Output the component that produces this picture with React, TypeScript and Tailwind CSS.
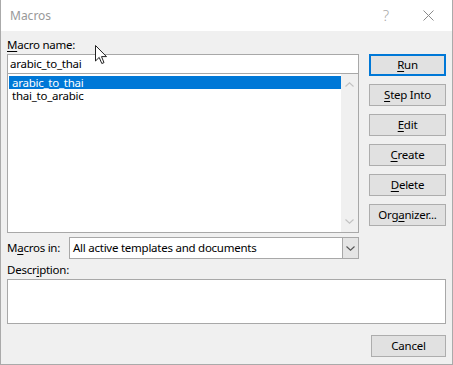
import React from 'react';

const font = { fontFamily: '"Segoe UI", "Noto Sans", "Open Sans", sans-serif' };

// Win10 style push button
const Btn = ({ label, u, isDefault }: { label: string; u: number; isDefault?: boolean }) => (
  <div
    className={`h-[22px] w-[77px] flex items-center justify-center bg-[#e1e1e1] text-black ${
      isDefault ? 'border-2 border-[#0078d7]' : 'border border-[#adadad]'
    }`}
  >
    <span>
      {label.slice(0, u)}
      <span className="underline underline-offset-2">{label[u]}</span>
      {label.slice(u + 1)}
    </span>
  </div>
);

const Chevron = ({ up, color }: { up?: boolean; color: string }) => (
  <svg width="9" height="5" viewBox="0 0 9 5" fill="none">
    <path d={up ? 'M0.5 4.5 L4.5 0.8 L8.5 4.5' : 'M0.5 0.5 L4.5 4.2 L8.5 0.5'} stroke={color} strokeWidth="1.1" />
  </svg>
);

export default function App() {
  return (
    <div className="w-[453px] h-[365px] flex flex-col bg-white border-l border-r border-b border-[#aaaaaa] relative select-none" style={font}>
      {/* title bar */}
      <div className="h-[31px] flex items-center bg-white">
        <span className="ml-[9px] text-[12px] text-[#999999]">Macros</span>
        <span className="ml-auto mr-[34px] text-[15px] text-[#aaaaaa] font-light">?</span>
        <svg width="11" height="11" viewBox="0 0 11 11" className="mr-[18px]">
          <path d="M0.5 0.5 L10.5 10.5 M10.5 0.5 L0.5 10.5" stroke="#8a8a8a" strokeWidth="1" />
        </svg>
      </div>

      {/* body */}
      <div className="flex-1 bg-[#f0f0f0] pl-[6px] pt-[6px] text-[11.5px] tracking-[-0.25px] text-black">
        <div className="flex">
          {/* left column */}
          <div className="w-[352px] flex flex-col">
            <div className="h-[17px] leading-[16px]">
              <span className="underline underline-offset-2">M</span>acro name:
            </div>
            <div className="h-[20px] bg-white border border-[#a8a8a8] flex items-center pl-[2px]">arabic_to_thai</div>
            <div className="h-[159px] bg-white border border-[#a8a8a8] border-t-0 flex">
              <div className="flex-1 pt-[2px] pl-[1px]">
                <div className="h-[13px] leading-[13px] bg-[#0078d7] text-white pl-[3px]">arabic_to_thai</div>
                <div className="h-[13px] leading-[13px] pl-[3px]">thai_to_arabic</div>
              </div>
              <div className="w-[17px] bg-[#f0f0f0] flex flex-col items-center justify-between py-[8px]">
                <Chevron up color="#c2c2c2" />
                <Chevron color="#c2c2c2" />
              </div>
            </div>
            <div className="mt-[4px] flex items-center">
              <span className="w-[62px]">
                M<span className="underline underline-offset-2">a</span>cros in:
              </span>
              <div className="flex-1 h-[22px] bg-white border border-[#a8a8a8] flex">
                <div className="flex-1 flex items-center pl-[3px]">All active templates and documents</div>
                <div className="w-[16px] bg-[#e5e5e5] border-l border-[#a8a8a8] flex items-center justify-center">
                  <Chevron color="#555555" />
                </div>
              </div>
            </div>
          </div>

          {/* right column */}
          <div className="ml-[10px] mt-[17px] flex flex-col gap-[8px]">
            <Btn label="Run" u={0} isDefault />
            <Btn label="Step Into" u={0} />
            <Btn label="Edit" u={0} />
            <Btn label="Create" u={0} />
            <Btn label="Delete" u={0} />
            <Btn label="Organizer..." u={3} />
          </div>
        </div>

        <div className="mt-[3px] h-[16px] leading-[16px]">
          Descr<span className="underline underline-offset-2">i</span>ption:
        </div>
        <div className="mt-[1px] w-[439px] h-[45px] bg-white border border-[#a8a8a8]" />

        <div className="mt-[11px] w-[439px] flex justify-end">
          <div className="h-[22px] w-[75px] flex items-center justify-center bg-[#e1e1e1] border border-[#adadad]">Cancel</div>
        </div>
      </div>

      {/* mouse pointer */}
      <svg width="13" height="20" viewBox="0 0 13 20" className="absolute left-[94px] top-[45px]">
        <path d="M0.5 0.5 L0.5 16 L4.2 12.4 L6.8 18.5 L9 17.6 L6.5 11.6 L11.5 11.6 Z" fill="white" stroke="#222222" strokeWidth="1" strokeLinejoin="round" />
      </svg>
    </div>
  );
}
